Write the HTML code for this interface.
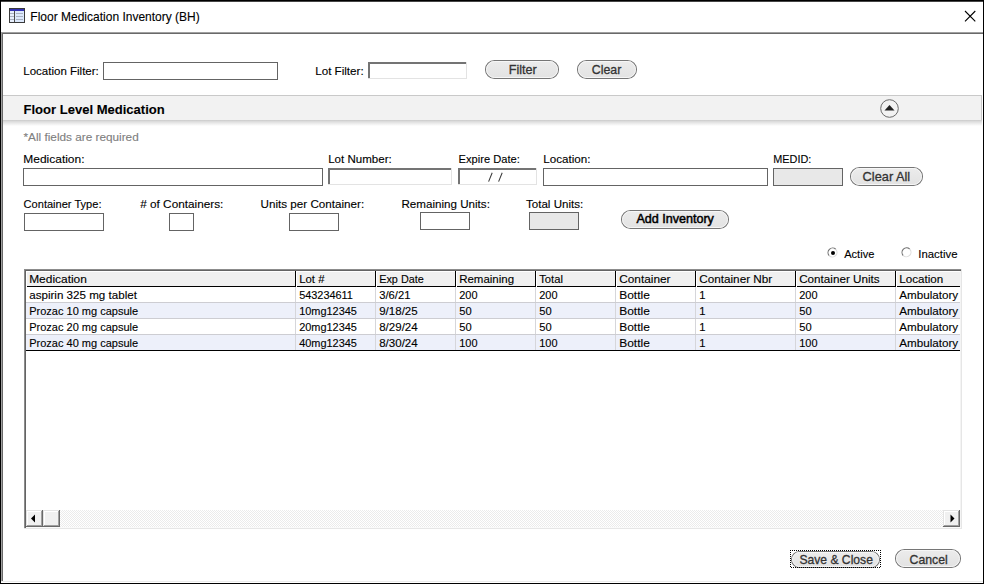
<!DOCTYPE html>
<html><head><meta charset="utf-8"><title>Floor Medication Inventory (BH)</title>
<style>html,body{margin:0;padding:0;background:#fff;width:984px;height:584px;overflow:hidden}
svg text{font-family:"Liberation Sans", sans-serif;white-space:pre}</style></head>
<body><svg width="984" height="584" viewBox="0 0 984 584" style="display:block"><rect x="0" y="0" width="984" height="584" fill="#fff" /><rect x="0" y="0" width="984" height="1" fill="#000" /><rect x="1" y="1" width="982" height="1" fill="#454545" /><rect x="0" y="583" width="984" height="1" fill="#000" /><rect x="0" y="0" width="1" height="584" fill="#000" /><rect x="983" y="0" width="1" height="584" fill="#000" /><rect x="1" y="32" width="982" height="1" fill="#a0a0a0" /><rect x="1" y="32" width="1" height="550" fill="#a0a0a0" /><rect x="2" y="33" width="981" height="1" fill="#696969" /><rect x="2" y="33" width="1" height="548" fill="#696969" /><rect x="1" y="581" width="982" height="1" fill="#ebebeb" /><g>
<rect x="9" y="8" width="16" height="15" fill="#3a3a3a"/>
<rect x="10" y="9" width="14" height="2" fill="#3232b4"/>
<rect x="10" y="11" width="4" height="11" fill="#e6eefc"/>
<rect x="15" y="11" width="9" height="11" fill="#dce8fb"/>
<rect x="14" y="11" width="1" height="11" fill="#4a4a4a"/>
<rect x="10" y="13" width="4" height="1" fill="#a9b1c2"/>
<rect x="10" y="16" width="4" height="1" fill="#a9b1c2"/>
<rect x="10" y="19" width="4" height="1" fill="#a9b1c2"/>
<rect x="16" y="13" width="7" height="1" fill="#a9b1c2"/>
<rect x="16" y="16" width="7" height="1" fill="#a9b1c2"/>
<rect x="16" y="19" width="7" height="1" fill="#a9b1c2"/>
</g><text x="30.3" y="21" font-size="12.6" font-weight="400" fill="#000" stroke="#000" stroke-width="0.12" textLength="169.5" lengthAdjust="spacingAndGlyphs">Floor Medication Inventory (BH)</text><path d="M965 11 L975.3 21.3 M975.3 11 L965 21.3" stroke="#000" stroke-width="1.1" fill="none"/><text x="23.3" y="75" font-size="11.6" font-weight="400" fill="#000" stroke="#000" stroke-width="0.12" textLength="75.5" lengthAdjust="spacingAndGlyphs">Location Filter:</text><rect x="103" y="62" width="175" height="18" fill="#646464" /><rect x="104" y="63" width="173" height="16" fill="#fff" /><text x="315.2" y="75" font-size="11.6" font-weight="400" fill="#000" stroke="#000" stroke-width="0.12" textLength="48.5" lengthAdjust="spacingAndGlyphs">Lot Filter:</text><rect x="368" y="62" width="99" height="17" fill="#e3e3e3" /><rect x="368" y="62" width="98" height="2" fill="#747474" /><rect x="368" y="62" width="2" height="16" fill="#747474" /><rect x="370" y="64" width="96" height="14" fill="#fff" /><rect x="485.5" y="60.5" width="73" height="18" rx="9.0" ry="9.0" fill="url(#btn)" stroke="#767676" stroke-width="1.15"/><rect x="486.5" y="61.5" width="71" height="16" rx="8.0" ry="8.0" fill="none" stroke="#f7f7f7" stroke-width="1"/><text x="508.8" y="74" font-size="12.6" font-weight="400" fill="#333" stroke="#333" stroke-width="0.3" textLength="28" lengthAdjust="spacingAndGlyphs">Filter</text><rect x="577.5" y="60.5" width="59" height="18" rx="9.0" ry="9.0" fill="url(#btn)" stroke="#767676" stroke-width="1.15"/><rect x="578.5" y="61.5" width="57" height="16" rx="8.0" ry="8.0" fill="none" stroke="#f7f7f7" stroke-width="1"/><text x="591.8" y="74" font-size="12.6" font-weight="400" fill="#333" stroke="#333" stroke-width="0.3" textLength="29.5" lengthAdjust="spacingAndGlyphs">Clear</text><defs><linearGradient id="shadow" x1="0" y1="0" x2="0" y2="1"><stop offset="0" stop-color="#c8c8c8"/><stop offset="0.18" stop-color="#d9d9d9"/><stop offset="1" stop-color="#ffffff"/></linearGradient><linearGradient id="btn" x1="0" y1="0" x2="0" y2="1"><stop offset="0" stop-color="#ececec"/><stop offset="1" stop-color="#e2e2e2"/></linearGradient><pattern id="checker" x="0" y="0" width="2" height="2" patternUnits="userSpaceOnUse"><rect width="1" height="1" fill="#000"/><rect x="1" y="1" width="1" height="1" fill="#000"/></pattern><pattern id="dither" x="0" y="0" width="2" height="2" patternUnits="userSpaceOnUse"><rect width="2" height="2" fill="#ffffff"/><rect width="1" height="1" fill="#ebebeb"/><rect x="1" y="1" width="1" height="1" fill="#ebebeb"/></pattern></defs><rect x="3" y="120" width="979" height="6" fill="url(#shadow)" /><rect x="3" y="95" width="979" height="25" fill="#c9c9c9" /><rect x="3" y="96" width="978" height="24" fill="#f2f2f2" /><text x="23.5" y="114" font-size="13.4" font-weight="700" fill="#000" stroke="#000" stroke-width="0.1" textLength="141.2" lengthAdjust="spacingAndGlyphs">Floor Level Medication</text><circle cx="889.5" cy="108.5" r="8.8" fill="#f2f2f2" stroke="#6a6a6a" stroke-width="1"/><path d="M884.5 110.5 L889.5 105 L894.5 110.5 Z" fill="#222"/><text x="23.5" y="141" font-size="11.6" font-weight="400" fill="#808080" stroke="#808080" stroke-width="0.12" textLength="115.2" lengthAdjust="spacingAndGlyphs">*All fields are required</text><text x="23.3" y="163" font-size="11.4" font-weight="400" fill="#000" stroke="#000" stroke-width="0.12" textLength="61.2" lengthAdjust="spacingAndGlyphs">Medication:</text><rect x="23" y="168" width="300" height="18" fill="#646464" /><rect x="24" y="169" width="298" height="16" fill="#fff" /><text x="328.2" y="163" font-size="11.4" font-weight="400" fill="#000" stroke="#000" stroke-width="0.12" textLength="63.5" lengthAdjust="spacingAndGlyphs">Lot Number:</text><rect x="328" y="168" width="124" height="17" fill="#e3e3e3" /><rect x="328" y="168" width="123" height="2" fill="#747474" /><rect x="328" y="168" width="2" height="16" fill="#747474" /><rect x="330" y="170" width="121" height="14" fill="#fff" /><text x="458.6" y="163" font-size="11.4" font-weight="400" fill="#000" stroke="#000" stroke-width="0.12" textLength="61.2" lengthAdjust="spacingAndGlyphs">Expire Date:</text><rect x="458" y="168" width="79" height="17" fill="#e3e3e3" /><rect x="458" y="168" width="78" height="2" fill="#747474" /><rect x="458" y="168" width="2" height="16" fill="#747474" /><rect x="460" y="170" width="76" height="14" fill="#fff" /><path d="M488.6 181.6 L492.2 172.8 M498.6 181.6 L502.2 172.8" stroke="#3a3a3a" stroke-width="1.05" fill="none"/><text x="543.3" y="163" font-size="11.4" font-weight="400" fill="#000" stroke="#000" stroke-width="0.12" textLength="47.2" lengthAdjust="spacingAndGlyphs">Location:</text><rect x="543" y="168" width="225" height="18" fill="#646464" /><rect x="544" y="169" width="223" height="16" fill="#fff" /><text x="773.3" y="163" font-size="11.4" font-weight="400" fill="#000" stroke="#000" stroke-width="0.12" textLength="38.0" lengthAdjust="spacingAndGlyphs">MEDID:</text><rect x="773" y="168" width="70" height="18" fill="#646464" /><rect x="774" y="169" width="68" height="16" fill="#e8e8e8" /><rect x="850.5" y="167.5" width="72" height="18" rx="9.0" ry="9.0" fill="url(#btn)" stroke="#767676" stroke-width="1.15"/><rect x="851.5" y="168.5" width="70" height="16" rx="8.0" ry="8.0" fill="none" stroke="#f7f7f7" stroke-width="1"/><text x="862.6" y="181" font-size="12.6" font-weight="400" fill="#333" stroke="#333" stroke-width="0.3" textLength="47.6" lengthAdjust="spacingAndGlyphs">Clear All</text><text x="23.6" y="208" font-size="11.4" font-weight="400" fill="#000" stroke="#000" stroke-width="0.12" textLength="77.9" lengthAdjust="spacingAndGlyphs">Container Type:</text><rect x="24" y="213" width="80" height="18" fill="#646464" /><rect x="25" y="214" width="78" height="16" fill="#fff" /><text x="140.2" y="208" font-size="11.4" font-weight="400" fill="#000" stroke="#000" stroke-width="0.12" textLength="83.2" lengthAdjust="spacingAndGlyphs"># of Containers:</text><rect x="169" y="213" width="25" height="18" fill="#646464" /><rect x="170" y="214" width="23" height="16" fill="#fff" /><text x="260.5" y="208" font-size="11.4" font-weight="400" fill="#000" stroke="#000" stroke-width="0.12" textLength="103.7" lengthAdjust="spacingAndGlyphs">Units per Container:</text><rect x="289" y="213" width="50" height="18" fill="#646464" /><rect x="290" y="214" width="48" height="16" fill="#fff" /><text x="401.4" y="208" font-size="11.4" font-weight="400" fill="#000" stroke="#000" stroke-width="0.12" textLength="88.5" lengthAdjust="spacingAndGlyphs">Remaining Units:</text><rect x="420" y="212" width="50" height="18" fill="#646464" /><rect x="421" y="213" width="48" height="16" fill="#fff" /><text x="526" y="208" font-size="11.4" font-weight="400" fill="#000" stroke="#000" stroke-width="0.12" textLength="57.2" lengthAdjust="spacingAndGlyphs">Total Units:</text><rect x="529" y="212" width="50" height="18" fill="#646464" /><rect x="530" y="213" width="48" height="16" fill="#e8e8e8" /><rect x="621.5" y="210.5" width="107" height="18" rx="9.0" ry="9.0" fill="url(#btn)" stroke="#767676" stroke-width="1.15"/><rect x="622.5" y="211.5" width="105" height="16" rx="8.0" ry="8.0" fill="none" stroke="#f7f7f7" stroke-width="1"/><text x="636.4" y="223" font-size="12.6" font-weight="400" fill="#000" stroke="#000" stroke-width="0.5" textLength="77.5" lengthAdjust="spacingAndGlyphs">Add Inventory</text><path d="M829.25 255.75 A4.6 4.6 0 0 1 835.75 249.25" stroke="#707070" stroke-width="1.1" fill="none"/><path d="M835.75 249.25 A4.6 4.6 0 0 1 829.25 255.75" stroke="#dcdcdc" stroke-width="1.1" fill="none"/><circle cx="833.0" cy="253.0" r="2" fill="#000"/><text x="844.2" y="258" font-size="11.4" font-weight="400" fill="#000" stroke="#000" stroke-width="0.12" textLength="30.2" lengthAdjust="spacingAndGlyphs">Active</text><path d="M903.25 255.55 A4.6 4.6 0 0 1 909.75 249.05" stroke="#707070" stroke-width="1.1" fill="none"/><path d="M909.75 249.05 A4.6 4.6 0 0 1 903.25 255.55" stroke="#dcdcdc" stroke-width="1.1" fill="none"/><text x="918.3" y="258" font-size="11.4" font-weight="400" fill="#000" stroke="#000" stroke-width="0.12" textLength="39.2" lengthAdjust="spacingAndGlyphs">Inactive</text><rect x="24" y="269" width="938" height="260" fill="#e3e3e3" /><rect x="24" y="269" width="937" height="2" fill="#8c8c8c" /><rect x="24" y="269" width="2" height="259" fill="#8c8c8c" /><rect x="25" y="270" width="936" height="1" fill="#646464" /><rect x="25" y="270" width="1" height="258" fill="#646464" /><rect x="26" y="271" width="934" height="257" fill="#fff" /><rect x="24" y="528" width="938" height="1" fill="#e6e6e6" /><rect x="961" y="269" width="1" height="260" fill="#e6e6e6" /><rect x="960" y="271" width="1" height="257" fill="#f4f4f4" /><rect x="26" y="527" width="935" height="1" fill="#fafafa" /><svg x="26" y="271" width="934" height="240" overflow="hidden"><g transform="translate(-26,-271)"><rect x="26" y="271" width="270" height="16" fill="#fff" /><rect x="295" y="271" width="1" height="16" fill="#000" /><rect x="27" y="286" width="269" height="1" fill="#000" /><rect x="27" y="272" width="268" height="14" fill="#f0f0f0" /><text x="29.2" y="283" font-size="11.2" font-weight="400" fill="#000" stroke="#000" stroke-width="0.12" textLength="57.7" lengthAdjust="spacingAndGlyphs">Medication</text><rect x="296" y="271" width="80" height="16" fill="#fff" /><rect x="375" y="271" width="1" height="16" fill="#000" /><rect x="297" y="286" width="79" height="1" fill="#000" /><rect x="297" y="272" width="78" height="14" fill="#f0f0f0" /><text x="299.2" y="283" font-size="11.2" font-weight="400" fill="#000" stroke="#000" stroke-width="0.12" textLength="25.3" lengthAdjust="spacingAndGlyphs">Lot #</text><rect x="376" y="271" width="80" height="16" fill="#fff" /><rect x="455" y="271" width="1" height="16" fill="#000" /><rect x="377" y="286" width="79" height="1" fill="#000" /><rect x="377" y="272" width="78" height="14" fill="#f0f0f0" /><text x="379.2" y="283" font-size="11.2" font-weight="400" fill="#000" stroke="#000" stroke-width="0.12" textLength="44.6" lengthAdjust="spacingAndGlyphs">Exp Date</text><rect x="456" y="271" width="80" height="16" fill="#fff" /><rect x="535" y="271" width="1" height="16" fill="#000" /><rect x="457" y="286" width="79" height="1" fill="#000" /><rect x="457" y="272" width="78" height="14" fill="#f0f0f0" /><text x="459.2" y="283" font-size="11.2" font-weight="400" fill="#000" stroke="#000" stroke-width="0.12" textLength="54.9" lengthAdjust="spacingAndGlyphs">Remaining</text><rect x="536" y="271" width="80" height="16" fill="#fff" /><rect x="615" y="271" width="1" height="16" fill="#000" /><rect x="537" y="286" width="79" height="1" fill="#000" /><rect x="537" y="272" width="78" height="14" fill="#f0f0f0" /><text x="539.2" y="283" font-size="11.2" font-weight="400" fill="#000" stroke="#000" stroke-width="0.12" textLength="23.7" lengthAdjust="spacingAndGlyphs">Total</text><rect x="616" y="271" width="80" height="16" fill="#fff" /><rect x="695" y="271" width="1" height="16" fill="#000" /><rect x="617" y="286" width="79" height="1" fill="#000" /><rect x="617" y="272" width="78" height="14" fill="#f0f0f0" /><text x="619.2" y="283" font-size="11.2" font-weight="400" fill="#000" stroke="#000" stroke-width="0.12" textLength="51.3" lengthAdjust="spacingAndGlyphs">Container</text><rect x="696" y="271" width="100" height="16" fill="#fff" /><rect x="795" y="271" width="1" height="16" fill="#000" /><rect x="697" y="286" width="99" height="1" fill="#000" /><rect x="697" y="272" width="98" height="14" fill="#f0f0f0" /><text x="699.2" y="283" font-size="11.2" font-weight="400" fill="#000" stroke="#000" stroke-width="0.12" textLength="73.1" lengthAdjust="spacingAndGlyphs">Container Nbr</text><rect x="796" y="271" width="100" height="16" fill="#fff" /><rect x="895" y="271" width="1" height="16" fill="#000" /><rect x="797" y="286" width="99" height="1" fill="#000" /><rect x="797" y="272" width="98" height="14" fill="#f0f0f0" /><text x="799.2" y="283" font-size="11.2" font-weight="400" fill="#000" stroke="#000" stroke-width="0.12" textLength="80.5" lengthAdjust="spacingAndGlyphs">Container Units</text><rect x="896" y="271" width="100" height="16" fill="#fff" /><rect x="995" y="271" width="1" height="16" fill="#000" /><rect x="897" y="286" width="99" height="1" fill="#000" /><rect x="897" y="272" width="98" height="14" fill="#f0f0f0" /><text x="899.2" y="283" font-size="11.2" font-weight="400" fill="#000" stroke="#000" stroke-width="0.12" textLength="44" lengthAdjust="spacingAndGlyphs">Location</text><rect x="26" y="287" width="935" height="15" fill="#ffffff" /><rect x="26" y="302" width="935" height="1" fill="#cdcdd2" /><rect x="295" y="287" width="1" height="15" fill="#d6d6da" /><text x="29.2" y="299" font-size="11.2" font-weight="400" fill="#000" stroke="#000" stroke-width="0.12" textLength="107.7" lengthAdjust="spacingAndGlyphs">aspirin 325 mg tablet</text><rect x="375" y="287" width="1" height="15" fill="#d6d6da" /><text x="299.2" y="299" font-size="11.2" font-weight="400" fill="#000" stroke="#000" stroke-width="0.12" textLength="53.7" lengthAdjust="spacingAndGlyphs">543234611</text><rect x="455" y="287" width="1" height="15" fill="#d6d6da" /><text x="379.2" y="299" font-size="11.2" font-weight="400" fill="#000" stroke="#000" stroke-width="0.12" textLength="31.2" lengthAdjust="spacingAndGlyphs">3/6/21</text><rect x="535" y="287" width="1" height="15" fill="#d6d6da" /><text x="459.2" y="299" font-size="11.2" font-weight="400" fill="#000" stroke="#000" stroke-width="0.12" textLength="18.3" lengthAdjust="spacingAndGlyphs">200</text><rect x="615" y="287" width="1" height="15" fill="#d6d6da" /><text x="539.2" y="299" font-size="11.2" font-weight="400" fill="#000" stroke="#000" stroke-width="0.12" textLength="18.3" lengthAdjust="spacingAndGlyphs">200</text><rect x="695" y="287" width="1" height="15" fill="#d6d6da" /><text x="619.2" y="299" font-size="11.2" font-weight="400" fill="#000" stroke="#000" stroke-width="0.12" textLength="30.6" lengthAdjust="spacingAndGlyphs">Bottle</text><rect x="795" y="287" width="1" height="15" fill="#d6d6da" /><text x="699.2" y="299" font-size="11.2" font-weight="400" fill="#000" stroke="#000" stroke-width="0.12">1</text><rect x="895" y="287" width="1" height="15" fill="#d6d6da" /><text x="799.2" y="299" font-size="11.2" font-weight="400" fill="#000" stroke="#000" stroke-width="0.12" textLength="18.3" lengthAdjust="spacingAndGlyphs">200</text><rect x="995" y="287" width="1" height="15" fill="#d6d6da" /><text x="899.2" y="299" font-size="11.2" font-weight="400" fill="#000" stroke="#000" stroke-width="0.12" textLength="59" lengthAdjust="spacingAndGlyphs">Ambulatory</text><rect x="26" y="303" width="935" height="15" fill="#edf0fa" /><rect x="26" y="318" width="935" height="1" fill="#cdcdd2" /><rect x="295" y="303" width="1" height="15" fill="#d6d6da" /><text x="29.2" y="315" font-size="11.2" font-weight="400" fill="#000" stroke="#000" stroke-width="0.12" textLength="109" lengthAdjust="spacingAndGlyphs">Prozac 10 mg capsule</text><rect x="375" y="303" width="1" height="15" fill="#d6d6da" /><text x="299.2" y="315" font-size="11.2" font-weight="400" fill="#000" stroke="#000" stroke-width="0.12" textLength="57.7" lengthAdjust="spacingAndGlyphs">10mg12345</text><rect x="455" y="303" width="1" height="15" fill="#d6d6da" /><text x="379.2" y="315" font-size="11.2" font-weight="400" fill="#000" stroke="#000" stroke-width="0.12" textLength="38.5" lengthAdjust="spacingAndGlyphs">9/18/25</text><rect x="535" y="303" width="1" height="15" fill="#d6d6da" /><text x="459.2" y="315" font-size="11.2" font-weight="400" fill="#000" stroke="#000" stroke-width="0.12">50</text><rect x="615" y="303" width="1" height="15" fill="#d6d6da" /><text x="539.2" y="315" font-size="11.2" font-weight="400" fill="#000" stroke="#000" stroke-width="0.12">50</text><rect x="695" y="303" width="1" height="15" fill="#d6d6da" /><text x="619.2" y="315" font-size="11.2" font-weight="400" fill="#000" stroke="#000" stroke-width="0.12" textLength="30.6" lengthAdjust="spacingAndGlyphs">Bottle</text><rect x="795" y="303" width="1" height="15" fill="#d6d6da" /><text x="699.2" y="315" font-size="11.2" font-weight="400" fill="#000" stroke="#000" stroke-width="0.12">1</text><rect x="895" y="303" width="1" height="15" fill="#d6d6da" /><text x="799.2" y="315" font-size="11.2" font-weight="400" fill="#000" stroke="#000" stroke-width="0.12">50</text><rect x="995" y="303" width="1" height="15" fill="#d6d6da" /><text x="899.2" y="315" font-size="11.2" font-weight="400" fill="#000" stroke="#000" stroke-width="0.12" textLength="59" lengthAdjust="spacingAndGlyphs">Ambulatory</text><rect x="26" y="319" width="935" height="15" fill="#ffffff" /><rect x="26" y="334" width="935" height="1" fill="#cdcdd2" /><rect x="295" y="319" width="1" height="15" fill="#d6d6da" /><text x="29.2" y="331" font-size="11.2" font-weight="400" fill="#000" stroke="#000" stroke-width="0.12" textLength="109" lengthAdjust="spacingAndGlyphs">Prozac 20 mg capsule</text><rect x="375" y="319" width="1" height="15" fill="#d6d6da" /><text x="299.2" y="331" font-size="11.2" font-weight="400" fill="#000" stroke="#000" stroke-width="0.12" textLength="57.7" lengthAdjust="spacingAndGlyphs">20mg12345</text><rect x="455" y="319" width="1" height="15" fill="#d6d6da" /><text x="379.2" y="331" font-size="11.2" font-weight="400" fill="#000" stroke="#000" stroke-width="0.12" textLength="38.5" lengthAdjust="spacingAndGlyphs">8/29/24</text><rect x="535" y="319" width="1" height="15" fill="#d6d6da" /><text x="459.2" y="331" font-size="11.2" font-weight="400" fill="#000" stroke="#000" stroke-width="0.12">50</text><rect x="615" y="319" width="1" height="15" fill="#d6d6da" /><text x="539.2" y="331" font-size="11.2" font-weight="400" fill="#000" stroke="#000" stroke-width="0.12">50</text><rect x="695" y="319" width="1" height="15" fill="#d6d6da" /><text x="619.2" y="331" font-size="11.2" font-weight="400" fill="#000" stroke="#000" stroke-width="0.12" textLength="30.6" lengthAdjust="spacingAndGlyphs">Bottle</text><rect x="795" y="319" width="1" height="15" fill="#d6d6da" /><text x="699.2" y="331" font-size="11.2" font-weight="400" fill="#000" stroke="#000" stroke-width="0.12">1</text><rect x="895" y="319" width="1" height="15" fill="#d6d6da" /><text x="799.2" y="331" font-size="11.2" font-weight="400" fill="#000" stroke="#000" stroke-width="0.12">50</text><rect x="995" y="319" width="1" height="15" fill="#d6d6da" /><text x="899.2" y="331" font-size="11.2" font-weight="400" fill="#000" stroke="#000" stroke-width="0.12" textLength="59" lengthAdjust="spacingAndGlyphs">Ambulatory</text><rect x="26" y="335" width="935" height="15" fill="#edf0fa" /><rect x="26" y="350" width="935" height="1" fill="#000" /><rect x="295" y="335" width="1" height="15" fill="#d6d6da" /><text x="29.2" y="347" font-size="11.2" font-weight="400" fill="#000" stroke="#000" stroke-width="0.12" textLength="109" lengthAdjust="spacingAndGlyphs">Prozac 40 mg capsule</text><rect x="375" y="335" width="1" height="15" fill="#d6d6da" /><text x="299.2" y="347" font-size="11.2" font-weight="400" fill="#000" stroke="#000" stroke-width="0.12" textLength="57.7" lengthAdjust="spacingAndGlyphs">40mg12345</text><rect x="455" y="335" width="1" height="15" fill="#d6d6da" /><text x="379.2" y="347" font-size="11.2" font-weight="400" fill="#000" stroke="#000" stroke-width="0.12" textLength="38.5" lengthAdjust="spacingAndGlyphs">8/30/24</text><rect x="535" y="335" width="1" height="15" fill="#d6d6da" /><text x="459.2" y="347" font-size="11.2" font-weight="400" fill="#000" stroke="#000" stroke-width="0.12" textLength="18.3" lengthAdjust="spacingAndGlyphs">100</text><rect x="615" y="335" width="1" height="15" fill="#d6d6da" /><text x="539.2" y="347" font-size="11.2" font-weight="400" fill="#000" stroke="#000" stroke-width="0.12" textLength="18.3" lengthAdjust="spacingAndGlyphs">100</text><rect x="695" y="335" width="1" height="15" fill="#d6d6da" /><text x="619.2" y="347" font-size="11.2" font-weight="400" fill="#000" stroke="#000" stroke-width="0.12" textLength="30.6" lengthAdjust="spacingAndGlyphs">Bottle</text><rect x="795" y="335" width="1" height="15" fill="#d6d6da" /><text x="699.2" y="347" font-size="11.2" font-weight="400" fill="#000" stroke="#000" stroke-width="0.12">1</text><rect x="895" y="335" width="1" height="15" fill="#d6d6da" /><text x="799.2" y="347" font-size="11.2" font-weight="400" fill="#000" stroke="#000" stroke-width="0.12" textLength="18.3" lengthAdjust="spacingAndGlyphs">100</text><rect x="995" y="335" width="1" height="15" fill="#d6d6da" /><text x="899.2" y="347" font-size="11.2" font-weight="400" fill="#000" stroke="#000" stroke-width="0.12" textLength="59" lengthAdjust="spacingAndGlyphs">Ambulatory</text></g></svg><rect x="26" y="510" width="934" height="17" fill="url(#dither)" /><rect x="26" y="510" width="17" height="17" fill="#696969" /><rect x="26" y="510" width="16" height="16" fill="#e3e3e3" /><rect x="27" y="511" width="15" height="15" fill="#a0a0a0" /><rect x="27" y="511" width="14" height="14" fill="#ffffff" /><rect x="28" y="512" width="13" height="13" fill="#f0f0f0" /><rect x="43" y="510" width="17" height="17" fill="#696969" /><rect x="43" y="510" width="16" height="16" fill="#e3e3e3" /><rect x="44" y="511" width="15" height="15" fill="#a0a0a0" /><rect x="44" y="511" width="14" height="14" fill="#ffffff" /><rect x="45" y="512" width="13" height="13" fill="#f0f0f0" /><rect x="943" y="510" width="17" height="17" fill="#696969" /><rect x="943" y="510" width="16" height="16" fill="#e3e3e3" /><rect x="944" y="511" width="15" height="15" fill="#a0a0a0" /><rect x="944" y="511" width="14" height="14" fill="#ffffff" /><rect x="945" y="512" width="13" height="13" fill="#f0f0f0" /><path d="M31 518.5 L35 514.5 L35 522.5 Z" fill="#000"/><path d="M954.5 518.5 L950.5 514.5 L950.5 522.5 Z" fill="#000"/><rect x="791.5" y="551.5" width="88" height="16" rx="8.0" ry="8.0" fill="url(#btn)" stroke="#767676" stroke-width="1.15"/><rect x="792.5" y="552.5" width="86" height="14" rx="7.0" ry="7.0" fill="none" stroke="#f7f7f7" stroke-width="1"/><text x="799.4" y="564" font-size="12.6" font-weight="400" fill="#333" stroke="#333" stroke-width="0.3" textLength="73.5" lengthAdjust="spacingAndGlyphs">Save &amp; Close</text><rect x="790" y="550" width="91" height="1" fill="url(#checker)" /><rect x="790" y="567" width="91" height="1" fill="url(#checker)" /><rect x="790" y="550" width="1" height="18" fill="url(#checker)" /><rect x="880" y="550" width="1" height="18" fill="url(#checker)" /><rect x="895.5" y="549.5" width="65" height="18" rx="9.0" ry="9.0" fill="url(#btn)" stroke="#767676" stroke-width="1.15"/><rect x="896.5" y="550.5" width="63" height="16" rx="8.0" ry="8.0" fill="none" stroke="#f7f7f7" stroke-width="1"/><text x="909.6" y="564" font-size="12.6" font-weight="400" fill="#333" stroke="#333" stroke-width="0.3" textLength="38.2" lengthAdjust="spacingAndGlyphs">Cancel</text></svg></body></html>
